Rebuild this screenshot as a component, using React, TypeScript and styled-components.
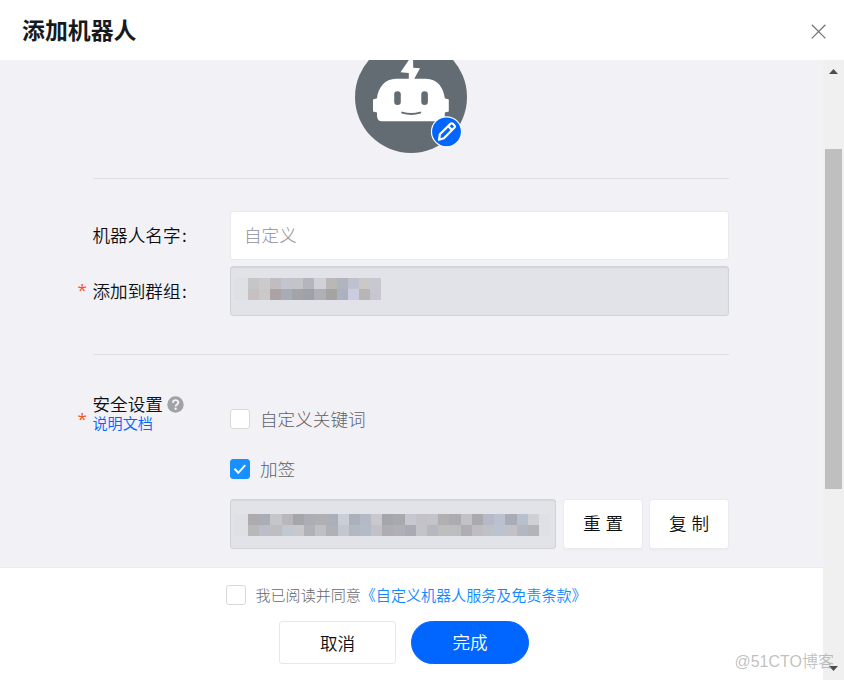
import React from "react";
import styled, { createGlobalStyle, css } from "styled-components";

const GlobalStyle = createGlobalStyle`
  * { box-sizing: border-box; }
  body { margin: 0; background: #fff; }
  button, input { font: inherit; letter-spacing: inherit; }
`;

const Dialog = styled.div`
  position: relative;
  width: 844px;
  height: 680px;
  display: flex;
  flex-direction: column;
  overflow: hidden;
  background: #fff;
  color: #0c0f12;
  font-family: "Noto Sans CJK SC", sans-serif;
  font-weight: 350;
  font-size: 17.6px;
`;

const Header = styled.header`
  height: 60px;
  flex: none;
  display: flex;
  align-items: center;
  justify-content: space-between;
  padding: 0 17px 0 22px;
`;

const Title = styled.h1`
  margin: 0;
  font-size: 22.9px;
  line-height: 58px;
  padding-bottom: 2px;
  font-weight: 700;
  color: #171a1d;
`;

const CloseButton = styled.button`
  display: flex;
  width: 16px;
  height: 16px;
  margin-top: 3px;
  padding: 0;
  border: 0;
  background: none;
`;

const Body = styled.div`
  display: flex;
  height: 620px;
`;

const Main = styled.main`
  width: 823px;
  display: flex;
  flex-direction: column;
`;

const ScrollArea = styled.section`
  height: 507px;
  overflow: hidden;
  padding: 0 94px 0 93px;
  background: #f1f1f6;
`;

const AvatarRow = styled.div`
  display: flex;
  justify-content: center;
  height: 119px;
  border-bottom: 1px solid #dfdfe5;
`;

const AvatarArt = styled.svg`
  flex: none;
  margin-top: -19px;
`;

const Field = styled.div<{ $gap: number }>`
  display: grid;
  grid-template-columns: 137px 499px;
  align-items: center;
  height: 50px;
  margin-top: ${(p) => p.$gap}px;
`;

const Label = styled.div<{ $required?: boolean }>`
  display: flex;
  line-height: 26px;
  white-space: nowrap;
  margin-left: -0.5px;
  ${(p) =>
    p.$required &&
    css`
      margin-left: -15.5px;
    `}
`;

const Colon = styled.span`
  margin-left: 1.5px;
`;

const Star = styled.span`
  width: 15px;
  color: #ff5219;
  font-family: "Open Sans", sans-serif;
  font-size: 17px;
  font-weight: 400;
  line-height: 24px;
`;

const TextInput = styled.input`
  width: 499px;
  height: 49px;
  margin-top: 1px;
  padding: 0 13px 2px;
  border: 1px solid #e9e9ee;
  border-radius: 3px;
  background: #fff;
  outline: 0;
  font-weight: 300;
  &::placeholder { color: #8e909a; opacity: 1; }
`;

const LockedInput = styled.div<{ $width: number; $top: number }>`
  width: ${(p) => p.$width}px;
  height: 50px;
  padding: ${(p) => p.$top}px 0 0 3px;
  display: flex;
  align-items: flex-start;
  border: 1px solid #d2d3d8;
  border-radius: 3px;
  background: #e2e3e8;
  box-shadow: inset 0 1px 1px #d5d6db;
`;

const MosaicFade = styled.div<{ $width: number }>`
  width: ${(p) => p.$width}px;
  height: 22px;
  background: #dfe0e5;
`;

const Mosaic = styled.div<{ $columns: number; $width: number }>`
  display: grid;
  grid-template-columns: repeat(${(p) => p.$columns}, 1fr);
  grid-auto-rows: 11px;
  width: ${(p) => p.$width}px;
`;

const Tile = styled.span<{ $color: string }>`
  background: ${(p) => p.$color};
`;

const Divider = styled.hr`
  height: 1px;
  margin: 38px 0 0;
  border: 0;
  background: #dfdfe5;
`;

const Security = styled.div`
  display: grid;
  grid-template-columns: 137px 499px;
  padding-top: 39px;
`;

const SecurityLabel = styled.div`
  display: flex;
  align-items: center;
  height: 38px;
  margin-left: -15.5px;
`;

const SecurityStar = styled(Star)`
  padding-top: 12px;
`;

const LabelStack = styled.div`
  display: flex;
  flex-direction: column;
`;

const LabelLine = styled.div`
  display: flex;
  align-items: center;
  gap: 4px;
  height: 20px;
  line-height: 20px;
`;

const DocLink = styled.a`
  height: 18px;
  line-height: 16px;
  font-size: 15.1px;
  color: #0066ff;
`;

const Options = styled.div`
  padding-top: 12px;
`;

const Option = styled.label`
  display: flex;
  align-items: center;
  gap: 10px;
  height: 26px;
  margin-bottom: 24px;
  line-height: 26px;
  color: #5f6267;
  font-weight: 300;
`;

const CheckBox = styled.span<{ $checked?: boolean }>`
  flex: none;
  display: flex;
  align-items: center;
  justify-content: center;
  width: 20px;
  height: 20px;
  border: 1px solid ${(p) => (p.$checked ? "#1890ff" : "#d9d9d9")};
  border-radius: 3px;
  background: ${(p) => (p.$checked ? "#1890ff" : "#fff")};
`;

const SecretRow = styled.div`
  display: flex;
  gap: 6px;
  margin-top: -7px;
`;

const SmallButton = styled.button`
  width: 80px;
  height: 50px;
  padding: 0 0 3px;
  border: 1px solid #ebebef;
  border-radius: 3px;
  background: #fff;
  box-shadow: 0 2px 0 rgba(0, 0, 0, 0.018);
  color: #0c0f12;
  font-weight: 350;
  word-spacing: 1px;
  &:first-of-type { margin-left: 1px; }
`;

const Footer = styled.footer`
  height: 113px;
  padding-top: 15px;
  border-top: 1px solid #e9e9ee;
  background: #fff;
`;

const Agreement = styled.label`
  display: flex;
  align-items: center;
  height: 24px;
  padding-left: 226px;
  font-size: 15.05px;
  color: #63666b;
`;

const AgreementText = styled.span`
  margin-left: 9.5px;
  white-space: nowrap;
  line-height: 24px;
  font-weight: 300;
`;

const TermsLink = styled.a`
  color: #1088ff;
  font-weight: 350;
`;

const Actions = styled.div`
  display: flex;
  gap: 15px;
  margin-top: 14px;
  padding-left: 279px;
`;

const ActionButton = styled.button<{ $primary?: boolean }>`
  width: ${(p) => (p.$primary ? 118 : 117)}px;
  height: 43px;
  padding: 0 0 ${(p) => (p.$primary ? 2 : 0)}px;
  border: 1px solid ${(p) => (p.$primary ? "#0066ff" : "#e8e8ea")};
  border-radius: ${(p) => (p.$primary ? 22 : 3)}px;
  background: ${(p) => (p.$primary ? "#0066ff" : "#fff")};
  color: ${(p) => (p.$primary ? "#fff" : "#0c0f12")};
  font-weight: 350;
`;

const ScrollTrack = styled.div`
  width: 21px;
  padding: 9px 2px 9px;
  display: flex;
  flex-direction: column;
  align-items: center;
  background: #f0f0f0;
`;

const ScrollThumb = styled.div`
  width: 17px;
  height: 340px;
  margin: 75px 0 auto;
  background: #bfbfbf;
`;

const Arrow = styled.svg`
  display: block;
  flex: none;
`;

const Watermark = styled.span`
  position: absolute;
  right: 10px;
  bottom: 6px;
  color: rgba(150, 150, 150, 0.6);
  font: 350 16px/24px "Liberation Sans", "Noto Sans CJK SC", sans-serif;
`;

const groupTiles = [
  "#c6c6c8", "#cbcbce", "#c0bcbf", "#c2c5ce", "#c3c4c8", "#b3b7bd", "#d0d1d7", "#b9b8b7", "#b0b4bf", "#bfc1cf", "#cac9c8", "#c9c8d2",
  "#c6c1c0", "#c9c9c7", "#aba2a6", "#a8acb4", "#a3a3aa", "#9da1a8", "#afb0b6", "#a5a4a2", "#abb1be", "#c9cddf", "#b8b5b5", "#c7c6d1",
];

const secretTiles = [
  "#adabad", "#a9adb7", "#c5c6ca", "#b9b7b9", "#a5a6aa", "#adaeb3", "#b0b0b3", "#adafb8", "#c9ced7", "#abb1bb", "#b3bac6", "#cac8cd", "#a5a5ab", "#a8a9ae", "#c6c8d1", "#c3c2c8", "#c3c4c9", "#b1afb0", "#acacae", "#c1c1c6", "#aaaaad", "#b5bac6", "#bbc1ce", "#a9acb7", "#b8c0cb", "#cfd0d4",
  "#b8b8ba", "#bbbdc8", "#bdbec1", "#c2c8d1", "#c7c8cc", "#b1b1b8", "#c0bfc5", "#afb0b8", "#c4c7d0", "#b4b8c1", "#b3bbc6", "#c2c1c7", "#aeadb4", "#afafb5", "#aaaab4", "#c4c3c9", "#b6b8bd", "#bebebf", "#bcbdc0", "#b0aeb3", "#bfbdc4", "#c0c0c7", "#bac3d0", "#c2c1c8", "#b2b7c2", "#b3b4b9",
];

const RobotAvatar = () => (
  <AvatarArt width="112" height="112" viewBox="0 0 112 112">
    <circle cx="56" cy="56" r="56" fill="#646c73" />
    <path
      fill="#fff"
      d="M58 13 45.500 31.300l8.300.8v5.600H41C30 37.700 23 46.500 22 57.200l-4 1.200v12l4 1.200V75q.2 5.300 5 5.300h58q4.600 0 4.800-5.300v-3.400l4-1.200v-12l-4-1.200C88.500 46 82 37.700 71 37.700H59.300l5.700-10.400-6.800-.5z"
    />
    <rect x="39.200" y="50.300" width="6.600" height="13.800" rx="3.300" fill="#646c73" />
    <rect x="66.300" y="50.300" width="6.600" height="13.800" rx="3.300" fill="#646c73" />
    <path d="M47.200 71.600q9 2.600 18 0" fill="none" stroke="#646c73" strokeWidth="2" strokeLinecap="round" />
    <circle cx="91.500" cy="90.800" r="15" fill="#0066ff" stroke="#fff" strokeWidth="1.200" />
    <g fill="none" stroke="#fff" strokeWidth="2.200" strokeLinejoin="round">
      <path d="m84 98.800.9-5.500 10.500-10.400q1.300-1.300 2.600 0l1.300 1.300q1.300 1.300 0 2.600L88.900 97.200z" />
      <path d="m93.300 85.300 3.600 3.600" />
    </g>
  </AvatarArt>
);

const HelpIcon = () => (
  <svg width="17" height="17" viewBox="0 0 17 17">
    <circle cx="8.500" cy="8.500" r="8.200" fill="#a1a2a5" />
    <path d="M5.900 6.700C5.900 3.200 11.300 3.300 11.300 6.500c0 2-2.700 2-2.700 4" fill="none" stroke="#f1f1f6" strokeWidth="1.900" />
    <circle cx="8.600" cy="12.700" r="1.200" fill="#f1f1f6" />
  </svg>
);

export default function App() {
  return (
    <>
      <GlobalStyle />
      <Dialog>
        <Header>
          <Title>添加机器人</Title>
          <CloseButton aria-label="关闭">
            <svg width="16" height="16" viewBox="0 0 16 16">
              <path d="m.8.800 13.600 13.600M14.400.800.8 14.400" stroke="#70747a" strokeWidth="1.250" />
            </svg>
          </CloseButton>
        </Header>
        <Body>
          <Main>
            <ScrollArea>
              <AvatarRow>
                <RobotAvatar />
              </AvatarRow>
              <Field $gap={31}>
                <Label>机器人名字<Colon>:</Colon></Label>
                <TextInput placeholder="自定义" />
              </Field>
              <Field $gap={6}>
                <Label $required><Star>*</Star>添加到群组<Colon>:</Colon></Label>
                <LockedInput $width={499} $top={11}>
                  <MosaicFade $width={14} />
                  <Mosaic $columns={12} $width={133}>
                    {groupTiles.map((color, i) => <Tile key={i} $color={color} />)}
                  </Mosaic>
                </LockedInput>
              </Field>
              <Divider />
              <Security>
                <SecurityLabel>
                  <SecurityStar>*</SecurityStar>
                  <LabelStack>
                    <LabelLine>安全设置<HelpIcon /></LabelLine>
                    <DocLink>说明文档</DocLink>
                  </LabelStack>
                </SecurityLabel>
                <Options>
                  <Option><CheckBox />自定义关键词</Option>
                  <Option>
                    <CheckBox $checked>
                      <svg width="14" height="12" viewBox="0 0 14 12">
                        <path d="m1.500 5.800 3.800 4L12.200 2.200" fill="none" stroke="#fff" strokeWidth="2" />
                      </svg>
                    </CheckBox>
                    加签
                  </Option>
                  <SecretRow>
                    <LockedInput $width={326} $top={14}>
                      <MosaicFade $width={14} />
                      <Mosaic $columns={26} $width={291}>
                        {secretTiles.map((color, i) => <Tile key={i} $color={color} />)}
                      </Mosaic>
                      <MosaicFade $width={11} />
                    </LockedInput>
                    <SmallButton>重 置</SmallButton>
                    <SmallButton>复 制</SmallButton>
                  </SecretRow>
                </Options>
              </Security>
            </ScrollArea>
            <Footer>
              <Agreement>
                <CheckBox />
                <AgreementText>
                  我已阅读并同意<TermsLink>《自定义机器人服务及免责条款》</TermsLink>
                </AgreementText>
              </Agreement>
              <Actions>
                <ActionButton>取消</ActionButton>
                <ActionButton $primary>完成</ActionButton>
              </Actions>
            </Footer>
          </Main>
          <ScrollTrack>
            <Arrow width="9" height="5" viewBox="0 0 9 5"><path d="M0 5 4.500 0 9 5z" fill="#4d4d4d" /></Arrow>
            <ScrollThumb />
            <Arrow width="9" height="5" viewBox="0 0 9 5"><path d="M0 0h9L4.500 5z" fill="#4d4d4d" /></Arrow>
          </ScrollTrack>
        </Body>
        <Watermark>@51CTO博客</Watermark>
      </Dialog>
    </>
  );
}
